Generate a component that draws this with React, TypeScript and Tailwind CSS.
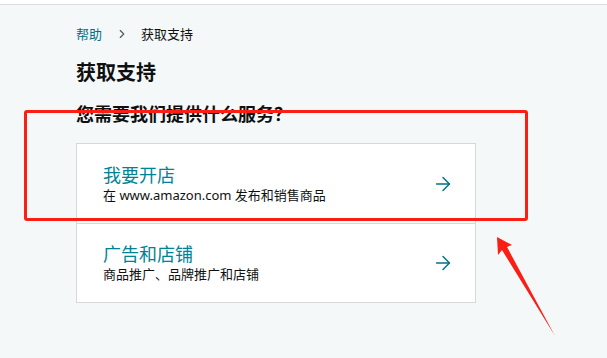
import { ArrowRight, ChevronRight } from "lucide-react"

const options = [
  { title: "我要开店", desc: "在 www.amazon.com 发布和销售商品" },
  { title: "广告和店铺", desc: "商品推广、品牌推广和店铺" },
]

export default function App() {
  return (
    <div
      className="relative h-[358px] w-[607px] overflow-hidden bg-[#f5f8f9] text-[#0f1111]"
      style={{ fontFamily: '"Noto Sans", "Noto Sans CJK SC", sans-serif' }}
    >
      {/* top strip */}
      <div className="h-[5px] border-b border-[#dcdfe0] bg-white" />

      <div className="px-[76px] pt-[19px]">
        {/* breadcrumb */}
        <nav className="flex items-center text-[13px] leading-[20px]">
          <span className="text-[#007185]">帮助</span>
          <ChevronRight className="ml-[13px] mr-[12px] h-[14px] w-[14px] text-[#565959]" strokeWidth={2} />
          <span className="text-[#0f1111]">获取支持</span>
        </nav>

        <h1 className="mt-[15px] text-[20px] font-bold leading-[28px]">获取支持</h1>
        <h2
          className="mt-[14px] text-[18px] font-bold leading-[24px]"
          style={{ fontFamily: '"Noto Sans CJK SC", sans-serif' }}
        >
          您需要我们提供什么服务？
        </h2>

        {/* options */}
        <div className="mt-[18px] w-[400px] border border-[#d5d9d9] bg-white">
          {options.map((o, i) => (
            <div
              key={o.title}
              className={`flex h-[79px] items-center justify-between pl-[26px] pr-[21px] ${i > 0 ? "border-t border-[#d5d9d9]" : ""}`}
            >
              <div>
                <div className="text-[18px] leading-[22px] text-[#008296]">{o.title}</div>
                <div className="text-[13px] leading-[18px]">{o.desc}</div>
              </div>
              <ArrowRight className="h-[22px] w-[22px] text-[#007185]" strokeWidth={1.6} />
            </div>
          ))}
        </div>
      </div>

      {/* annotation overlay */}
      <div className="pointer-events-none absolute left-[24px] top-[110px] h-[111px] w-[504px] rounded-[3px] border-[3px] border-[#fa1e14]" />
      <svg className="pointer-events-none absolute left-0 top-0" width="607" height="358">
        <polygon points="497,237 512,245 507,247 555,336 502,250 498,255" fill="#fa1e14" />
      </svg>
    </div>
  )
}
